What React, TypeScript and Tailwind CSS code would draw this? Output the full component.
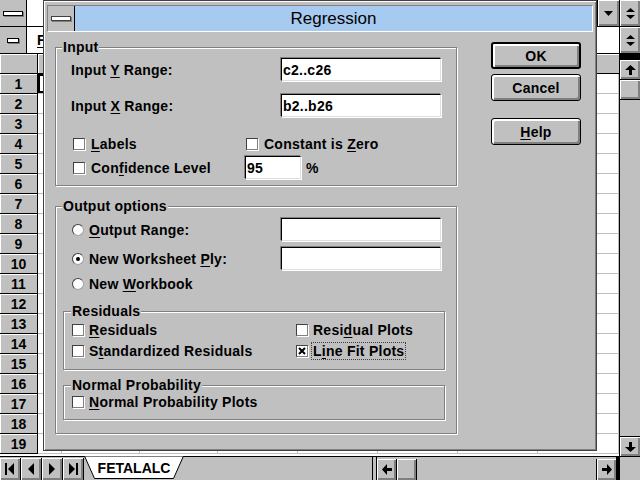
import React from 'react'

const font = "font-['Liberation_Sans',Arial,sans-serif]"
const colW = ['w-[24px]', 'w-[78px]', 'w-[78px]', 'w-[80px]', 'w-[80px]', 'w-[80px]', 'w-[80px]']

function U({ children }: { children: React.ReactNode }) {
  return <span className="underline decoration-1 underline-offset-[2px]">{children}</span>
}

function Bevel({ className = '', children }: { className?: string; children?: React.ReactNode }) {
  return (
    <div className={"bg-[#c0c0c0] shadow-[inset_1px_1px_0_#fff,inset_-2px_-2px_0_#808080] flex items-center justify-center " + className}>
      {children}
    </div>
  )
}

const ArrUp = () => <svg width="11" height="10" viewBox="0 0 11 10"><polygon points="5.5,0 11,5 7,5 7,10 4,10 4,5 0,5" fill="black" /></svg>
const ArrDown = () => <svg width="11" height="10" viewBox="0 0 11 10"><polygon points="5.5,10 11,5 7,5 7,0 4,0 4,5 0,5" fill="black" /></svg>
const ArrLeft = () => <svg width="10" height="11" viewBox="0 0 10 11"><polygon points="0,5.5 5,0 5,4 10,4 10,7 5,7 5,11" fill="black" /></svg>
const ArrRight = () => <svg width="10" height="11" viewBox="0 0 10 11"><polygon points="10,5.5 5,0 5,4 0,4 0,7 5,7 5,11" fill="black" /></svg>
const Restore = () => (
  <svg width="9" height="11" viewBox="0 0 9 11">
    <polygon points="4.5,0 9,4 0,4" fill="black" />
    <polygon points="0,7 9,7 4.5,11" fill="black" />
  </svg>
)

function Check({ checked = false }: { checked?: boolean }) {
  return (
    <span className="w-[12px] h-[12px] shrink-0 bg-white border border-t-[#404040] border-l-[#404040] border-r-[#808080] border-b-[#808080] shadow-[1px_1px_0_#fff] flex items-center justify-center">
      {checked && (
        <svg width="8" height="8" viewBox="0 0 8 8"><path d="M1 1L7 7M7 1L1 7" stroke="black" strokeWidth="2" /></svg>
      )}
    </span>
  )
}

function Radio({ on = false }: { on?: boolean }) {
  return (
    <span className="w-[12px] h-[12px] shrink-0 rounded-full bg-white border border-[#404040] border-r-[#a0a0a0] border-b-[#a0a0a0] flex items-center justify-center">
      {on && <span className="w-[4px] h-[4px] rounded-full bg-black" />}
    </span>
  )
}

function Field({ w, value = '' }: { w: string; value?: string }) {
  return (
    <div className={"h-[23px] shrink-0 bg-white border border-t-black border-l-black border-r-[#dfdfdf] border-b-[#dfdfdf] shadow-[-1px_-1px_0_#808080,1px_1px_0_#fff] pl-[1px] flex items-center " + w}>
      {value}
    </div>
  )
}

function Group({ label, left, className, children }: { label: string; left: string; className: string; children: React.ReactNode }) {
  return (
    <div className={"relative shrink-0 border border-[#808080] shadow-[1px_1px_0_#fff,inset_1px_1px_0_#fff] " + className}>
      <span className={"absolute -top-[9px] bg-[#c0c0c0] px-px leading-4 " + left}>{label}</span>
      {children}
    </div>
  )
}

function Btn({ children, def = false }: { children: React.ReactNode; def?: boolean }) {
  return (
    <div className={"w-[90px] h-[27px] rounded-[3px] flex items-center justify-center shadow-[inset_2px_2px_0_#fff,inset_-2px_-2px_0_#808080] " + (def ? "border-2 border-black" : "border border-black")}>
      {children}
    </div>
  )
}

export default function App() {
  const rows = Array.from({ length: 19 }, (_, i) => i + 1)
  return (
    <div className={"relative w-[640px] h-[480px] overflow-hidden bg-white text-black text-[14px] leading-4 font-bold " + font}>
      <div className="flex flex-col h-full">
        {/* app caption */}
        <div className="flex h-[27px] shrink-0 border-b border-black">
          <div className="w-[27px] border-r border-black bg-[#c0c0c0] flex items-center justify-center">
            <span className="w-[20px] h-[5px] bg-white border border-black shadow-[1px_1px_0_#808080]" />
          </div>
          <div className="flex-1" />
          <Bevel className="w-[22px] border-l border-black">
            <svg width="9" height="5" viewBox="0 0 9 5"><polygon points="0,0 9,0 4.5,5" fill="black" /></svg>
          </Bevel>
          <Bevel className="w-[21px] border-l border-black"><Restore /></Bevel>
        </div>

        {/* menu bar */}
        <div className="flex h-[27px] shrink-0 border-b border-black">
          <div className="w-[27px] border-r border-black bg-[#c0c0c0] flex items-center justify-center">
            <span className="w-[12px] h-[5px] bg-white border border-black shadow-[1px_1px_0_#808080]" />
          </div>
          <div className="flex-1 flex items-center pl-[10px]">
            <span><U>F</U>ile</span>
          </div>
          <Bevel className="w-[21px] border-l border-black"><Restore /></Bevel>
        </div>

        {/* sheet */}
        <div className="flex h-[402px] shrink-0">
          <div className="flex-1 flex flex-col">
            <div className="flex h-[20px]">
              <div className="w-[38px] shrink-0 bg-[#c0c0c0] border-r border-b border-black shadow-[inset_1px_1px_0_#fff]" />
              {colW.map((w, i) => (
                <div key={i} className={"shrink-0 bg-[#c0c0c0] border-r border-b border-black shadow-[inset_1px_1px_0_#fff] " + w} />
              ))}
              <div className="flex-1 bg-[#c0c0c0] border-b border-black shadow-[inset_1px_1px_0_#fff]" />
            </div>
            {rows.map((n) => (
              <div key={n} className="flex h-[20px]">
                <div className="w-[38px] shrink-0 bg-[#c0c0c0] border-r border-b border-black shadow-[inset_1px_1px_0_#fff] flex items-center justify-center">{n}</div>
                {colW.map((w, i) => (
                  <div key={i} className={"shrink-0 border-r border-b border-[#c0c0c0] " + w + (n === 1 && i === 0 ? " shadow-[inset_2px_2px_0_#000,inset_-2px_-2px_0_#000]" : "")} />
                ))}
                <div className="flex-1 border-r border-b border-[#c0c0c0]" />
              </div>
            ))}
          </div>
          <div className="w-[21px] shrink-0 border-l border-black bg-[#c0c0c0] flex flex-col">
            <div className="h-[6px] bg-black" />
            <Bevel className="h-[20px] border-b border-black"><ArrUp /></Bevel>
            <Bevel className="h-[20px] border-b border-black" />
            <div className="flex-1" />
            <Bevel className="h-[20px] border-t border-black"><ArrDown /></Bevel>
          </div>
        </div>

        {/* sheet tabs + horizontal scroll */}
        <div className="flex h-[24px] shrink-0 border-t border-black bg-[#c0c0c0]">
          {[0, 1, 2, 3].map((k) => (
            <Bevel key={k} className="w-[21px] h-[22px] mt-px border-r border-black">
              <svg width="10" height="12" viewBox="0 0 10 12">
                {k === 0 && <><rect x="0" y="0" width="2" height="12" fill="black" /><polygon points="9,0 3,6 9,12" fill="black" /></>}
                {k === 1 && <polygon points="8,0 2,6 8,12" fill="black" />}
                {k === 2 && <polygon points="2,0 8,6 2,12" fill="black" />}
                {k === 3 && <><polygon points="1,0 7,6 1,12" fill="black" /><rect x="8" y="0" width="2" height="12" fill="black" /></>}
              </svg>
            </Bevel>
          ))}
          <div className="relative w-[100px] -mt-px shrink-0 flex items-center justify-center">
            <svg className="absolute inset-0" width="100" height="24" viewBox="0 0 100 24">
              <polygon points="0.5,0 10.5,22.5 89.5,22.5 99.5,0" fill="white" stroke="black" />
            </svg>
            <span className="relative">FETALALC</span>
          </div>
          <div className="w-[188px] shrink-0" />
          <div className="w-[5px] shrink-0 border-l border-r border-black" />
          <Bevel className="w-[20px] h-[21px] mt-[2px] border-r border-black"><ArrLeft /></Bevel>
          <Bevel className="w-[20px] h-[21px] mt-[2px] border-r border-black" />
          <div className="w-[179px] shrink-0" />
          <Bevel className="w-[20px] h-[21px] mt-[2px] border-l border-black"><ArrRight /></Bevel>
          <div className="w-[4px] shrink-0 bg-black" />
          <div className="flex-1" />
        </div>
      </div>

      {/* Regression dialog */}
      <div className="absolute left-[43px] top-0 w-[554px] h-[451px] bg-[#c0c0c0] border border-[#404040] shadow-[inset_1px_1px_0_#fff,inset_-1px_-1px_0_#808080] px-[3px] pt-[4px] flex flex-col tracking-[0.25px]">
        <div className="flex h-[27px] shrink-0 border border-t-[#808080] border-l-[#808080] border-r-white border-b-white">
          <div className="w-[27px] border-r border-black flex items-center justify-center">
            <span className="w-[20px] h-[5px] bg-white border border-[#404040] shadow-[1px_1px_0_#808080]" />
          </div>
          <div className="flex-1 bg-[#a6caf0] flex items-center justify-center text-[17px] font-normal tracking-normal">Regression</div>
        </div>

        <div className="flex pl-[8px]">
          <div className="flex flex-col">
            <Group label="Input" left="left-[6px]" className="w-[402px] h-[139px] mt-[15px]">
              <div className="flex flex-col pl-[15px] pt-[10px]">
                <div className="flex items-center h-[23px]">
                  <span className="w-[210px]">Input <U>Y</U> Range:</span>
                  <Field w="w-[160px]" value="c2..c26" />
                </div>
                <div className="flex items-center h-[23px] mt-[13px]">
                  <span className="w-[210px]">Input <U>X</U> Range:</span>
                  <Field w="w-[160px]" value="b2..b26" />
                </div>
                <div className="flex items-center h-[16px] mt-[19px] pl-[2px]">
                  <div className="w-[173px] flex items-center gap-[6px]"><Check /><span><U>L</U>abels</span></div>
                  <div className="flex items-center gap-[6px]"><Check /><span>Constant is <U>Z</U>ero</span></div>
                </div>
                <div className="flex items-center h-[23px] mt-[4px] pl-[2px]">
                  <div className="w-[172px] flex items-center gap-[6px]"><Check /><span>Con<U>f</U>idence Level</span></div>
                  <Field w="w-[56px]" value="95" />
                  <span className="ml-[5px]">%</span>
                </div>
              </div>
            </Group>

            <Group label="Output options" left="left-[6px]" className="w-[402px] h-[228px] mt-[20px]">
              <div className="flex flex-col pt-[11px]">
                <div className="flex items-center h-[23px] pl-[16px]">
                  <div className="w-[209px] flex items-center gap-[5px]"><Radio /><span><U>O</U>utput Range:</span></div>
                  <Field w="w-[160px]" />
                </div>
                <div className="flex items-center h-[23px] mt-[6px] pl-[16px]">
                  <div className="w-[209px] flex items-center gap-[5px]"><Radio on /><span>New Worksheet <U>P</U>ly:</span></div>
                  <Field w="w-[160px]" />
                </div>
                <div className="flex items-center h-[16px] mt-[6px] pl-[16px]">
                  <div className="flex items-center gap-[5px]"><Radio /><span>New <U>W</U>orkbook</span></div>
                </div>

                <Group label="Residuals" left="left-[7px]" className="w-[382px] h-[59px] ml-[7px] mt-[19px]">
                  <div className="flex flex-col pl-[8px] pt-[10px]">
                    <div className="flex items-center h-[16px]">
                      <div className="w-[224px] flex items-center gap-[5px]"><Check /><span><U>R</U>esiduals</span></div>
                      <div className="flex items-center gap-[5px]"><Check /><span>Resi<U>d</U>ual Plots</span></div>
                    </div>
                    <div className="flex items-center h-[16px] mt-[5px]">
                      <div className="w-[224px] flex items-center gap-[5px]"><Check /><span>S<U>t</U>andardized Residuals</span></div>
                      <div className="flex items-center gap-[3px]"><Check checked /><span className="border border-dotted border-[#404040] px-px">L<U>i</U>ne Fit Plots</span></div>
                    </div>
                  </div>
                </Group>

                <Group label="Normal Probability" left="left-[7px]" className="w-[382px] h-[35px] ml-[7px] mt-[15px]">
                  <div className="flex items-center h-[16px] pl-[8px] mt-[8px]">
                    <div className="flex items-center gap-[5px]"><Check /><span><U>N</U>ormal Probability Plots</span></div>
                  </div>
                </Group>
              </div>
            </Group>
          </div>

          <div className="flex flex-col ml-[34px] mt-[10px]">
            <Btn def>OK</Btn>
            <div className="mt-[5px]"><Btn>Cancel</Btn></div>
            <div className="mt-[17px]"><Btn><span><U>H</U>elp</span></Btn></div>
          </div>
        </div>
      </div>
    </div>
  )
}
